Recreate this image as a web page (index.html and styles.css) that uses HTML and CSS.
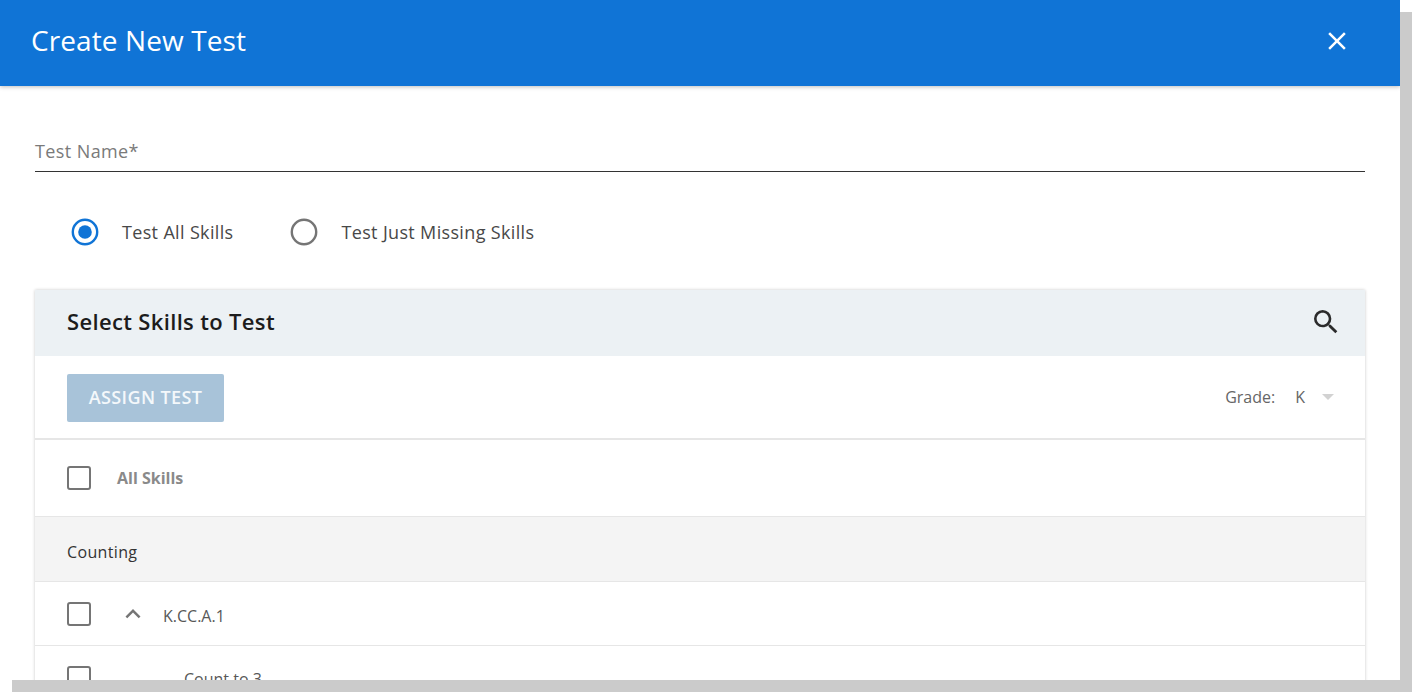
FILE: index.html
```html
<!DOCTYPE html>
<html lang="en">
<head>
<meta charset="utf-8">
<title>Create New Test</title>
<link rel="stylesheet" href="styles.css">
</head>
<body>
<div class="dialog">
  <header class="appbar">
    <h1 class="appbar-title">Create New Test</h1>
    <svg class="close-icon" width="30" height="30" viewBox="0 0 24 24"><path d="M19 6.41 17.59 5 12 10.59 6.41 5 5 6.41 10.59 12 5 17.59 6.41 19 12 13.41 17.59 19 19 17.59 13.41 12z" fill="#fff"/></svg>
  </header>
  <main class="content">
    <div class="field"><span class="field-label">Test Name*</span></div>
    <div class="radios">
      <label class="radio">
        <svg width="28" height="28" viewBox="0 0 28 28"><circle cx="14" cy="14" r="12.2" fill="none" stroke="#1074d6" stroke-width="2.4"/><circle cx="14" cy="14" r="6.8" fill="#1074d6"/></svg>
        <span>Test All Skills</span>
      </label>
      <label class="radio">
        <svg width="28" height="28" viewBox="0 0 28 28"><circle cx="14" cy="14" r="12.2" fill="none" stroke="#757575" stroke-width="2.4"/></svg>
        <span>Test Just Missing Skills</span>
      </label>
    </div>
    <section class="card">
      <div class="card-head">
        <h2 class="card-title">Select Skills to Test</h2>
        <svg class="search-icon" width="32" height="32" viewBox="0 0 24 24"><path d="M15.5 14h-.79l-.28-.27A6.47 6.47 0 0 0 16 9.5 6.5 6.5 0 1 0 9.5 16c1.61 0 3.09-.59 4.23-1.57l.27.28v.79l5 4.99L20.49 19l-4.99-5zm-6 0C7.01 14 5 11.99 5 9.5S7.01 5 9.5 5 14 7.01 14 9.5 11.99 14 9.5 14z" fill="#2b2b2b"/></svg>
      </div>
      <div class="toolbar">
        <button class="assign-btn" type="button">ASSIGN TEST</button>
        <div class="grade">
          <span class="grade-label">Grade:</span>
          <span class="grade-value">K</span>
          <span class="grade-caret"></span>
        </div>
      </div>
      <div class="row row-all">
        <span class="checkbox"></span>
        <span class="all-label">All Skills</span>
      </div>
      <div class="row row-group">Counting</div>
      <div class="row row-skill">
        <span class="checkbox"></span>
        <svg class="chevron" width="30" height="30" viewBox="0 0 24 24"><path d="M12 8 6 14l1.41 1.41L12 10.83l4.59 4.58L18 14z" fill="#757575"/></svg>
        <span class="skill-label">K.CC.A.1</span>
      </div>
      <div class="row row-sub">
        <span class="checkbox"></span>
        <span class="sub-label">Count to 3</span>
      </div>
    </section>
  </main>
</div>
</body>
</html>
```
FILE: styles.css
```css
* {
  box-sizing: border-box;
}

html,
body {
  margin: 0;
  height: 692px;
  overflow: hidden;
  background: #fff;
}

body {
  font-family: "Open Sans", "Liberation Sans", sans-serif;
  color: #333;
}

.dialog {
  width: 1400px;
  height: 680px;
  background: #fff;
  box-shadow: 12px 12px 0 #cbcbcb;
  overflow: hidden;
}

.appbar {
  height: 86px;
  background: #1074d6;
  box-shadow: 0 1px 4px rgba(0, 0, 0, 0.25);
  display: flex;
  align-items: center;
  justify-content: space-between;
  padding: 0 48px 5px 31px;
}

.appbar-title {
  margin: 0 0 2px;
  font-size: 28px;
  font-weight: 400;
  letter-spacing: 0.1px;
  color: #fff;
}

.content {
  padding: 0 35px;
}

.field {
  height: 86px;
  padding-top: 54px;
  display: flex;
}

.field-label {
  flex: 1;
  height: 32px;
  font-size: 18px;
  line-height: 23px;
  letter-spacing: 0.4px;
  color: #7a7a7a;
  border-bottom: 1px solid #333;
}

.radios {
  height: 118px;
  display: flex;
  gap: 57px;
  padding: 46px 0 0 36px;
  align-items: flex-start;
}

.radio {
  display: flex;
  align-items: center;
  gap: 23px;
  font-size: 18px;
  letter-spacing: 0.34px;
  color: #484848;
}

.card {
  width: 1330px;
  box-shadow: 0 0 3px rgba(0, 0, 0, 0.22);
}

.card-head {
  height: 66px;
  background: #ecf1f4;
  display: flex;
  align-items: center;
  justify-content: space-between;
  padding: 0 23px 0 32px;
}

.card-title {
  margin: 0 0 4px;
  font-size: 22px;
  font-weight: 600;
  letter-spacing: 0.34px;
  color: #1c1c1c;
}

.search-icon {
  margin-bottom: 2px;
}

.toolbar {
  height: 84px;
  display: flex;
  align-items: flex-start;
  justify-content: space-between;
  padding: 18px 31px 0 32px;
  border-bottom: 2px solid #e6e6e6;
}

.assign-btn {
  width: 157px;
  height: 48px;
  padding: 0 0 2px;
  border: 0;
  border-radius: 2px;
  background: #a8c3d9;
  color: #f4f8fb;
  font: 600 18px "Open Sans", sans-serif;
  letter-spacing: 0.4px;
}

.grade {
  display: flex;
  align-items: center;
  height: 48px;
  padding-bottom: 2px;
  font-size: 16px;
  color: #666;
}

.grade-value {
  margin-left: 20px;
}

.grade-caret {
  margin-left: 17px;
  border-left: 6.5px solid transparent;
  border-right: 6.5px solid transparent;
  border-top: 6px solid #d2d2d2;
}

.row {
  display: flex;
  align-items: center;
  padding-left: 32px;
  border-bottom: 1px solid #e6e6e6;
}

.row-all {
  height: 77px;
}

.row-group {
  height: 65px;
  padding-top: 5px;
  background: #f4f4f4;
  font-size: 16px;
  font-weight: 500;
  letter-spacing: 0.35px;
  color: #333;
}

.row-skill {
  height: 64px;
}

.row-sub {
  height: 64px;
  align-items: flex-start;
  padding-top: 20px;
}

.checkbox {
  width: 24px;
  height: 24px;
  border: 2.6px solid #757575;
  border-radius: 3px;
  flex: none;
}

.all-label {
  margin-left: 26px;
  font-size: 16px;
  font-weight: 700;
  color: #8a8a8a;
}

.chevron {
  margin-left: 27px;
}

.skill-label {
  margin-left: 15px;
  padding-top: 4px;
  font-size: 16px;
  color: #585858;
}

.sub-label {
  margin-left: 93px;
  padding-top: 1px;
  font-size: 16px;
  line-height: 24px;
  color: #585858;
}
```
